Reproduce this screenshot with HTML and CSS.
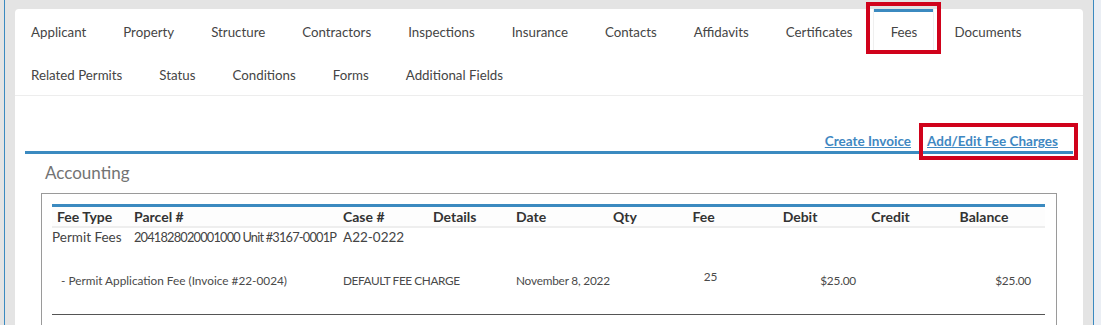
FILE: index.html
```html
<!DOCTYPE html>
<html lang="en">
<head>
<meta charset="utf-8">
<title>Permit - Fees</title>
<link rel="stylesheet" href="styles.css">
</head>
<body>
<div class="frame">
  <div class="rail-left"></div>
  <main class="card">
    <nav class="tabs">
      <div class="tab-row">
        <a class="tab">Applicant</a>
        <a class="tab">Property</a>
        <a class="tab">Structure</a>
        <a class="tab">Contractors</a>
        <a class="tab">Inspections</a>
        <a class="tab">Insurance</a>
        <a class="tab">Contacts</a>
        <a class="tab">Affidavits</a>
        <a class="tab">Certificates</a>
        <a class="tab active">Fees</a>
        <a class="tab">Documents</a>
      </div>
      <div class="tab-row">
        <a class="tab">Related Permits</a>
        <a class="tab">Status</a>
        <a class="tab">Conditions</a>
        <a class="tab">Forms</a>
        <a class="tab">Additional Fields</a>
      </div>
    </nav>
    <div class="content">
      <div class="toolbar">
        <a class="link">Create Invoice</a>
        <a class="link marked">Add/Edit Fee Charges</a>
      </div>
      <section class="section">
        <h2 class="heading">Accounting</h2>
        <div class="box">
          <table class="fees">
            <colgroup>
              <col class="c-type"><col class="c-parcel"><col class="c-case"><col class="c-details"><col class="c-date">
              <col class="c-qty"><col class="c-fee"><col class="c-debit"><col class="c-credit"><col class="c-balance">
            </colgroup>
            <thead>
              <tr>
                <th class="first">Fee Type</th>
                <th>Parcel #</th>
                <th>Case #</th>
                <th>Details</th>
                <th>Date</th>
                <th class="center">Qty</th>
                <th class="center">Fee</th>
                <th class="center">Debit</th>
                <th class="center">Credit</th>
                <th class="center">Balance</th>
              </tr>
            </thead>
            <tbody>
              <tr class="group">
                <td>Permit Fees</td>
                <td class="parcel">2041828020001000 Unit #3167-0001P</td>
                <td>A22-0222</td>
                <td></td><td></td><td></td><td></td><td></td><td></td><td></td>
              </tr>
              <tr class="item">
                <td colspan="2" class="indent">- Permit Application Fee (Invoice #22-0024)</td>
                <td class="caps">DEFAULT FEE CHARGE</td>
                <td></td>
                <td>November 8, 2022</td>
                <td></td>
                <td class="qty">25</td>
                <td class="money debit">$25.00</td>
                <td></td>
                <td class="money balance">$25.00</td>
              </tr>
            </tbody>
          </table>
        </div>
      </section>
    </div>
  </main>
  <div class="rail-right"></div>
</div>
</body>
</html>
```

FILE: styles.css
```css
* { box-sizing: border-box; }

body {
  margin: 0;
  background: #e4e4e4;
  font-family: Lato, "Liberation Sans", sans-serif;
  color: #444;
  height: 325px;
  overflow: hidden;
}

.frame {
  display: flex;
  height: 325px;
}

.rail-left {
  width: 15px;
  flex: none;
  background: linear-gradient(to right, #e4e4e4 4px, #3b8ac0 4px, #3b8ac0 5px, #e4e4e4 5px);
}

.rail-right {
  width: 18px;
  flex: none;
  background: linear-gradient(to right, #e4e4e4 10px, #3b8ac0 10px, #3b8ac0 11px, #eaeef4 11px);
}

.card {
  flex: 1;
  margin-top: 9px;
  background: #fff;
  border-radius: 4px 4px 0 0;
}

/* Tabs */
.tabs {
  border-bottom: 1px solid #ededed;
}

.tab-row {
  display: flex;
  height: 43px;
}

.tab {
  position: relative;
  padding: 3px 17px 0;
  margin-right: 3px;
  line-height: 40px;
  font-size: 13.3px;
  color: #454545;
  white-space: nowrap;
}

.tab:first-child { padding-left: 16px; }

.tab.active {
  border-left: 1px solid #efefef;
  border-right: 1px solid #efefef;
  box-shadow: inset 0 3px 0 #3b8ac0;
  padding: 3px 16px 0 17px;
}

.tab.active::after {
  content: "";
  position: absolute;
  left: -8px;
  right: -8px;
  top: -7px;
  bottom: -2px;
  border: 4px solid #d0021b;
}

/* Content */
.content {
  padding: 0 10px;
}

.toolbar {
  display: flex;
  justify-content: flex-end;
  align-items: flex-end;
  gap: 16px;
  height: 55px;
  padding: 0 15px 2px 0;
}

.link {
  position: relative;
  font-size: 13.5px;
  font-weight: 700;
  line-height: 16px;
  color: #3f88c2;
  text-decoration: underline;
}

.link.marked::after {
  content: "";
  position: absolute;
  left: -8px;
  right: -20px;
  top: -10px;
  bottom: -11px;
  border: 4px solid #d0021b;
}

.section {
  border-top: 3px solid #3b8ac0;
  padding: 0 16px;
}

.heading {
  margin: 9px 0 0;
  padding-left: 4px;
  font-size: 17px;
  font-weight: 400;
  line-height: 20px;
  color: #737373;
}

.box {
  margin-top: 10px;
  border: 1px solid #9a9a9a;
  padding: 10px 11px 30px 10px;
}

/* Table */
.fees {
  width: 100%;
  table-layout: fixed;
  border-collapse: collapse;
  border-top: 3px solid #3b8ac0;
  border-bottom: 1px solid #555;
  font-size: 13.5px;
}

.c-type { width: 82px; }
.c-parcel { width: 209px; }
.c-case { width: 90px; }
.c-details { width: 83px; }
.c-date { width: 69px; }
.c-qty { width: 80px; }
.c-fee { width: 77px; }
.c-debit { width: 116px; }
.c-credit { width: 65px; }
.c-balance { width: 122px; }

.fees th {
  height: 21px;
  padding: 1px 0 0;
  text-align: left;
  font-weight: 700;
  font-size: 14px;
  color: #333;
  background: #fdfdfd;
  border-bottom: 2px solid #eeeeee;
  white-space: nowrap;
}

.fees th.first { padding-left: 5px; }
.fees th.center { text-align: center; }

.fees td {
  padding: 0;
  white-space: nowrap;
  overflow: visible;
  color: #444;
}

.group td {
  height: 19px;
  line-height: 19px;
}

.group td.parcel {
  font-size: 12.8px;
  letter-spacing: -0.8px;
}

.item td {
  height: 68px;
  font-size: 11.8px;
  letter-spacing: -0.2px;
  color: #4a4a4a;
  vertical-align: middle;
}

.item td.indent {
  padding-left: 9px;
  letter-spacing: 0;
}

.item td.caps { letter-spacing: -0.4px; }

.item td.qty {
  text-align: center;
  padding: 0 0 7px 14px;
}

.item td.money { text-align: right; }
.item td.debit { padding-right: 2px; }
.item td.balance { padding-right: 14px; }
```
